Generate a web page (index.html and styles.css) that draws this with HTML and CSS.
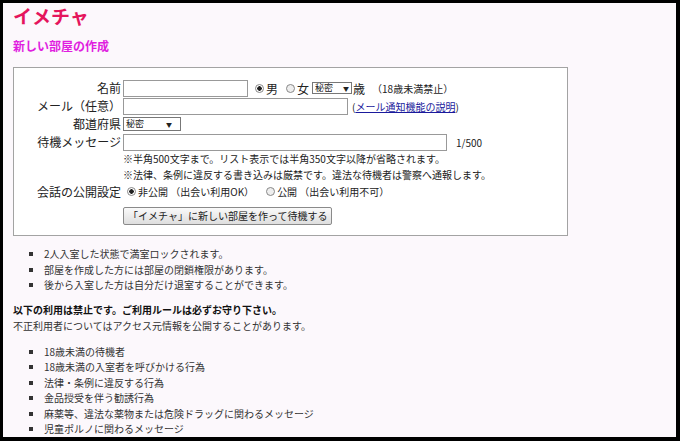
FILE: index.html
```html
<!DOCTYPE html>
<html lang="ja">

<head>
    <meta charset="UTF-8">
    <meta name="viewport" content="width=device-width, initial-scale=1.0">
    <title>イメチャ</title>
    <link rel="stylesheet" href="styles.css">
</head>

<body>
    <div class="page">
        <h1 class="logo">イメチャ</h1>
        <h2 class="subtitle">新しい部屋の作成</h2>

        <div class="create-box">
            <div class="form-grid">
                <div class="label">名前</div>
                <div class="field">
                    <input type="text" class="input-name">
                    <label class="sex"><input type="radio" name="sex" checked>男</label>
                    <label class="sex"><input type="radio" name="sex">女</label>
                    <span class="select-wrap age"><select><option>秘密</option></select></span><span class="sex">歳</span>
                    <span class="small">（18歳未満禁止）</span>
                </div>

                <div class="label">メール（任意）</div>
                <div class="field">
                    <input type="text" class="input-mail">
                    <span class="small link-note">(<a href="#">メール通知機能の説明</a>)</span>
                </div>

                <div class="label">都道府県</div>
                <div class="field">
                    <span class="select-wrap pref"><select><option>秘密</option></select></span>
                </div>

                <div class="label">待機メッセージ</div>
                <div class="field">
                    <input type="text" class="input-msg">
                    <span class="small counter">1/500</span>
                </div>

                <div class="note">※半角500文字まで。リスト表示では半角350文字以降が省略されます。</div>
                <div class="note">※法律、条例に違反する書き込みは厳禁です。違法な待機者は警察へ通報します。</div>

                <div class="label">会話の公開設定</div>
                <div class="field small">
                    <label class="open"><input type="radio" name="open" checked>非公開 （出会い利用OK）</label>
                    <label class="open"><input type="radio" name="open">公開 （出会い利用不可）</label>
                </div>

                <div class="submit-row">
                    <button class="btn-create">「イメチャ」に新しい部屋を作って待機する</button>
                </div>
            </div>
        </div>

        <ul class="info-list">
            <li>2人入室した状態で満室ロックされます。</li>
            <li>部屋を作成した方には部屋の閉鎖権限があります。</li>
            <li>後から入室した方は自分だけ退室することができます。</li>
        </ul>

        <p class="rules"><strong>以下の利用は禁止です。ご利用ルールは必ずお守り下さい。</strong><br>
            不正利用者についてはアクセス元情報を公開することがあります。</p>

        <ul class="info-list">
            <li>18歳未満の待機者</li>
            <li>18歳未満の入室者を呼びかける行為</li>
            <li>法律・条例に違反する行為</li>
            <li>金品授受を伴う勧誘行為</li>
            <li>麻薬等、違法な薬物または危険ドラッグに関わるメッセージ</li>
            <li>児童ポルノに関わるメッセージ</li>
        </ul>
    </div>
</body>

</html>
```

FILE: styles.css
```css
* {
    margin: 0;
    padding: 0;
    box-sizing: border-box;
}

body {
    background-color: #000;
    font-family: "Noto Sans CJK JP", "Liberation Sans", sans-serif;
    color: #333;
}

.page {
    margin: 3px 4px 4px 3px;
    height: 434px;
    overflow: hidden;
    background-color: #fcf8fc;
    padding: 2px 0 0 10px;
}

.logo {
    font-size: 19px;
    line-height: 22px;
    color: #e5155c;
}

.subtitle {
    margin-top: 11px;
    font-size: 12px;
    line-height: 16px;
    color: #e01ee0;
}

.create-box {
    margin-top: 13px;
    width: 555px;
    background: #fff;
    border: 1px solid #a3a3a3;
    padding: 11px 0 10px 0;
}

.form-grid {
    display: grid;
    grid-template-columns: 107px 1fr;
    grid-template-rows: 18px 18px 18px 18px 15.5px 15.5px 19px auto;
    column-gap: 2px;
    align-items: center;
}

.label {
    text-align: right;
    font-size: 12px;
    line-height: 18px;
    color: #222;
}

.field {
    display: flex;
    align-items: center;
    font-size: 12px;
    color: #222;
}

.small {
    font-size: 10px;
}

input[type="text"] {
    height: 17px;
    border: 1px solid #999;
    background: #fff;
    outline: none;
}

.input-name {
    width: 125px;
}

.input-mail {
    width: 225px;
}

.input-msg {
    width: 324px;
}

input[type="radio"] {
    appearance: none;
    width: 9px;
    height: 9px;
    border: 1px solid #888;
    border-radius: 50%;
    background: #eee;
    margin-right: 2px;
}

input[type="radio"]:checked {
    background: radial-gradient(circle, #222 0, #222 2px, #fff 2.5px);
}

.sex {
    display: flex;
    align-items: center;
}

.sex:first-of-type {
    margin-left: 7px;
}

label.sex + label.sex {
    margin-left: 8px;
}

.select-wrap {
    position: relative;
    display: inline-block;
}

.select-wrap select {
    appearance: none;
    display: block;
    border: 1px solid #777;
    background: #fff;
    font-family: inherit;
    font-size: 9px;
    line-height: 10px;
    padding: 0 2px;
    color: #222;
}

.select-wrap::after {
    content: "▼";
    position: absolute;
    top: 50%;
    transform: translateY(-50%);
    font-size: 6px;
    color: #222;
}

.age {
    margin-left: 3px;
}

.age select {
    width: 40px;
    height: 12px;
}

.age::after {
    right: 3px;
}

.pref select {
    width: 58px;
    height: 14px;
}

.pref::after {
    right: 9px;
}

.age + .sex {
    margin-left: 1px;
}

.sex + .small {
    margin-left: 7px;
}

.link-note {
    margin-left: 4px;
}

.link-note a {
    color: #1a1a9c;
}

.counter {
    margin-left: 9px;
}

.note {
    grid-column: 2;
    font-size: 10px;
    line-height: 15.5px;
    color: #222;
}

.open {
    display: flex;
    align-items: center;
    margin-left: 4px;
}

.open + .open {
    margin-left: 12px;
}

.submit-row {
    grid-column: 2;
    padding-top: 6px;
}

.btn-create {
    display: block;
    height: 18px;
    padding: 0 4px;
    font-family: inherit;
    font-size: 10px;
    line-height: 16px;
    color: #222;
    border: 1px solid #8a8a8a;
    border-radius: 2px;
    background: linear-gradient(#fafafa, #dedede);
}

.info-list {
    list-style: square;
    padding-left: 31px;
    font-size: 10px;
    line-height: 15.5px;
    color: #333;
}

.create-box + .info-list {
    margin-top: 10px;
}

.rules {
    margin-top: 9px;
    font-size: 10px;
    line-height: 16px;
    color: #333;
}

.rules strong {
    color: #111;
}

.rules + .info-list {
    margin-top: 10px;
}
```
